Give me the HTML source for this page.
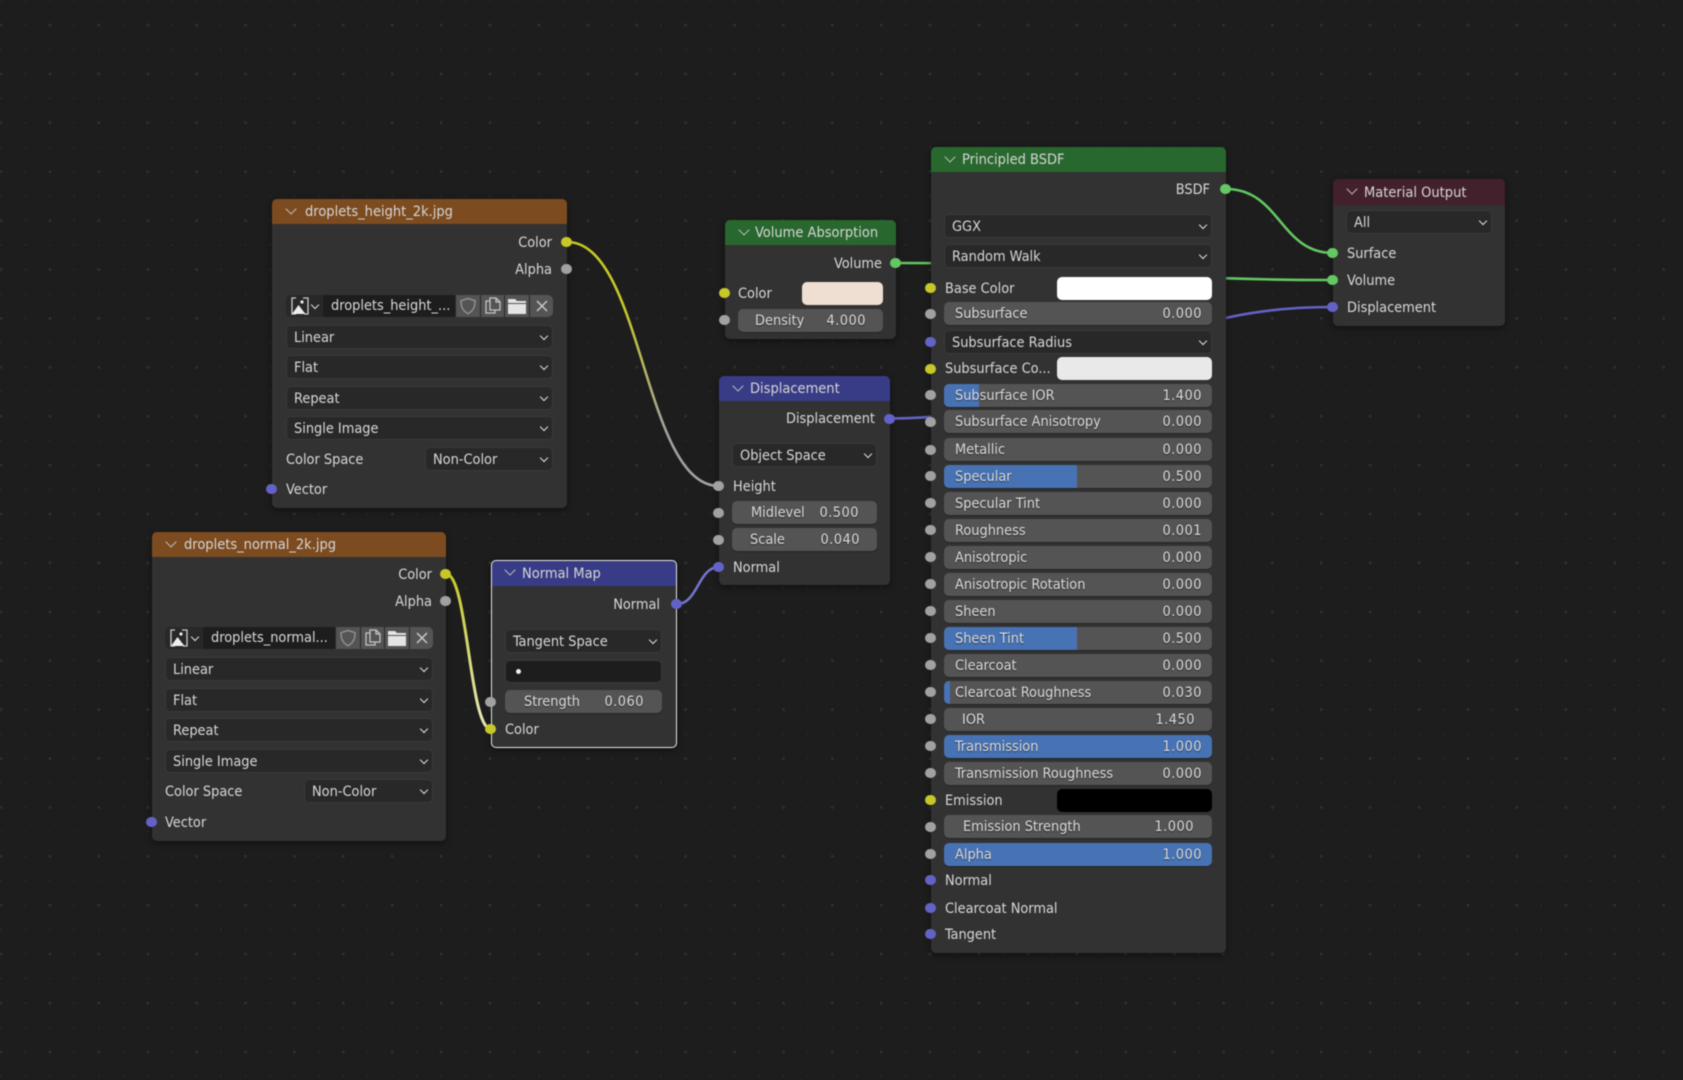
<!DOCTYPE html>
<html><head><meta charset="utf-8"><title>Shader nodes</title>
<style>
html,body{margin:0;padding:0;width:1683px;height:1080px;overflow:hidden;background:#1d1d1d}
#w{position:absolute;left:0;top:0;width:1683px;height:1080px;filter:blur(.55px);font:14.4px "DejaVu Sans Condensed","DejaVu Sans","Liberation Sans",sans-serif;font-stretch:condensed;color:#dcdcdc}
#w>*{position:absolute}
svg{display:block}
.n{background:#323232;border-radius:5px;box-shadow:0 2px 7px rgba(0,0,0,.45)}
.sel{outline:1.5px solid #e8e8e8;outline-offset:-1px}
.h{height:25px;line-height:26px;font-size:14.5px;border-radius:5px 5px 0 0;color:#d6d6d6;white-space:nowrap;box-sizing:border-box}
.h:before{content:"";position:absolute;left:15px;top:6px;width:7px;height:7px;border-right:1.6px solid #bdbdbd;border-bottom:1.6px solid #bdbdbd;transform:rotate(45deg)}
.o{background:#7c4b1f}.g{background:#28672e}.b{background:#383b85}.m{background:#43212c}
.t{height:20px;line-height:22px;white-space:nowrap;color:#d8d8d8}
.d{box-sizing:border-box;height:24px;line-height:24px;background:#282828;border:1px solid #393939;border-radius:5px;padding-left:7px;color:#d8d8d8;white-space:nowrap}
.d:after{content:"";position:absolute;right:5px;top:7px;width:5px;height:5px;border-right:1.6px solid #ddd;border-bottom:1.6px solid #ddd;transform:rotate(45deg)}
.f{box-sizing:border-box;height:23px;line-height:25px;background:#545454;border-radius:5px;overflow:hidden;white-space:nowrap;box-shadow:0 1px 1px rgba(0,0,0,.25)}
.f i{position:absolute;left:0;top:0;bottom:0;background:#4772b3}
.f b,.f u{position:absolute;top:0;font-weight:normal;text-decoration:none;color:#dcdcdc;text-shadow:0 1px 1px rgba(0,0,0,.55)}
.f u{letter-spacing:.5px}
.c{border-radius:5px;box-sizing:border-box;height:23px}
.s{box-sizing:border-box;width:10.500px;height:10.500px;margin:-.5px 0 0 -.8px;border-radius:50%}
.y{background:#c7c729}.a{background:#a1a1a1}.p{background:#6363c7}.e{background:#63c763}
.k{box-sizing:border-box;height:22px;background:#545454}
</style></head><body><div id="w">

<svg style="left:0;top:0" width="1683" height="1080">
<defs>
<pattern id="gd" patternUnits="userSpaceOnUse" x="-11" y="-11.45" width="48.9" height="48.9">
<circle cx="12" cy="12" r="1.2" fill="#272727"/><circle cx="36.45" cy="12" r="1.2" fill="#272727"/>
<circle cx="12" cy="36.45" r="1.5" fill="#303030"/><circle cx="36.45" cy="36.45" r="1.2" fill="#272727"/>
</pattern>
<linearGradient id="yg" gradientUnits="userSpaceOnUse" x1="567" y1="242" x2="719" y2="486"><stop offset=".3" stop-color="#c7c729"/><stop offset=".75" stop-color="#a1a1a1"/></linearGradient>
<linearGradient id="yw" gradientUnits="userSpaceOnUse" x1="446" y1="574" x2="491" y2="729"><stop offset="0" stop-color="#c7c729"/><stop offset="1" stop-color="#e8e8c0"/></linearGradient>
</defs>
<rect width="1683" height="1080" fill="url(#gd)"/>
<g fill="none" stroke-width="2.6" stroke-linecap="round">
<path d="M567 242C643 242 643 486 719 486" stroke="url(#yg)"/>
<path d="M446 574C468 574 469 729 491 729" stroke="url(#yw)" stroke-width="3"/>
<path d="M677 604C698 604 698 567 719 567" stroke="#7474d0"/>
<path d="M896 263C1114 263 1114 280 1333 280" stroke="#63c763"/>
<path d="M890 418.500C1111 418 1111 307 1333 307" stroke="#6363c7"/>
<path d="M1226 189C1280 189 1280 253 1333 253" stroke="#63c763"/>
</g>
</svg>

<!-- droplets_height -->
<div class="n" style="left:272px;top:199px;width:295px;height:309px"></div>
<div class="h o" style="left:272px;top:199px;width:295px;padding-left:33px">droplets_height_2k.jpg</div>
<div class="t" style="right:1131px;top:232px">Color</div>
<div class="t" style="right:1131px;top:259px">Alpha</div>
<div class="c" style="left:286px;top:295px;width:267px;height:22px;background:#282828"></div>
<svg style="left:290px;top:296px" width="20" height="20" viewBox="0 0 20 20" fill="none"><path d="M6 2H2v16h4M13 2h5v16h-4" stroke="#ccc" stroke-width="1.3"/><path d="M2 18l6.500-9 7 9z" fill="#eee"/><circle cx="12" cy="6" r="1.600" fill="#eee"/></svg>
<div style="left:312px;top:302px;width:5px;height:5px;border-right:1.4px solid #ddd;border-bottom:1.4px solid #ddd;transform:rotate(45deg)"></div>
<div class="t" style="left:323px;top:295px;width:132px;height:22px;line-height:23px;background:#1d1d1d;padding-left:8px;box-sizing:border-box;overflow:hidden">droplets_height_...</div>
<div class="k" style="left:456px;top:295px;width:24px;border-radius:0"></div>
<svg style="left:458px;top:296px" width="20" height="20" viewBox="0 0 20 20" fill="none"><path d="M10 2.500l7 2.200c0 6-1.500 10-7 13-5.500-3-7-7-7-13z" stroke="#8f8f8f" stroke-width="1.500"/></svg>
<div class="k" style="left:481px;top:295px;width:23px"></div>
<svg style="left:483px;top:296px" width="20" height="20" viewBox="0 0 20 20" fill="none"><path d="M7 5H3v12h9v-3M7 2h6l4 4v8H7zM13 2v4h4" stroke="#c4c4c4" stroke-width="1.300"/></svg>
<div class="k" style="left:505px;top:295px;width:24px"></div>
<svg style="left:507px;top:296px" width="20" height="20" viewBox="0 0 20 20"><path d="M1 3h7l2 2h9v2H1z M1 8h18v10H1z" fill="#e4e4e4"/></svg>
<div class="k" style="left:530px;top:295px;width:23px;border-radius:0 5px 5px 0"></div>
<svg style="left:533px;top:297px" width="18" height="18" viewBox="0 0 18 18" fill="none"><path d="M4 4l10 10M14 4L4 14" stroke="#c8c8c8" stroke-width="1.500"/></svg>
<div class="d" style="left:286px;top:325px;width:267px">Linear</div>
<div class="d" style="left:286px;top:355px;width:267px">Flat</div>
<div class="d" style="left:286px;top:386px;width:267px">Repeat</div>
<div class="d" style="left:286px;top:416px;width:267px">Single Image</div>
<div class="t" style="left:286px;top:449px">Color Space</div>
<div class="d" style="left:425px;top:447px;width:128px">Non-Color</div>
<div class="t" style="left:286px;top:479px">Vector</div>

<!-- droplets_normal -->
<div class="n" style="left:152px;top:532px;width:294px;height:309px"></div>
<div class="h o" style="left:152px;top:532px;width:294px;padding-left:32px">droplets_normal_2k.jpg</div>
<div class="t" style="right:1251px;top:564px">Color</div>
<div class="t" style="right:1251px;top:591px">Alpha</div>
<div class="c" style="left:165px;top:627px;width:268px;height:22px;background:#282828"></div>
<svg style="left:169px;top:628px" width="20" height="20" viewBox="0 0 20 20" fill="none"><path d="M6 2H2v16h4M13 2h5v16h-4" stroke="#ccc" stroke-width="1.3"/><path d="M2 18l6.500-9 7 9z" fill="#eee"/><circle cx="12" cy="6" r="1.600" fill="#eee"/></svg>
<div style="left:192px;top:634px;width:5px;height:5px;border-right:1.4px solid #ddd;border-bottom:1.4px solid #ddd;transform:rotate(45deg)"></div>
<div class="t" style="left:203px;top:627px;width:132px;height:22px;line-height:23px;background:#1d1d1d;padding-left:8px;box-sizing:border-box;overflow:hidden">droplets_normal...</div>
<div class="k" style="left:336px;top:627px;width:24px"></div>
<svg style="left:338px;top:628px" width="20" height="20" viewBox="0 0 20 20" fill="none"><path d="M10 2.500l7 2.200c0 6-1.500 10-7 13-5.500-3-7-7-7-13z" stroke="#8f8f8f" stroke-width="1.500"/></svg>
<div class="k" style="left:361px;top:627px;width:23px"></div>
<svg style="left:363px;top:628px" width="20" height="20" viewBox="0 0 20 20" fill="none"><path d="M7 5H3v12h9v-3M7 2h6l4 4v8H7zM13 2v4h4" stroke="#c4c4c4" stroke-width="1.300"/></svg>
<div class="k" style="left:385px;top:627px;width:24px"></div>
<svg style="left:387px;top:628px" width="20" height="20" viewBox="0 0 20 20"><path d="M1 3h7l2 2h9v2H1z M1 8h18v10H1z" fill="#e4e4e4"/></svg>
<div class="k" style="left:410px;top:627px;width:23px;border-radius:0 5px 5px 0"></div>
<svg style="left:413px;top:629px" width="18" height="18" viewBox="0 0 18 18" fill="none"><path d="M4 4l10 10M14 4L4 14" stroke="#c8c8c8" stroke-width="1.500"/></svg>
<div class="d" style="left:165px;top:657px;width:268px">Linear</div>
<div class="d" style="left:165px;top:688px;width:268px">Flat</div>
<div class="d" style="left:165px;top:718px;width:268px">Repeat</div>
<div class="d" style="left:165px;top:749px;width:268px">Single Image</div>
<div class="t" style="left:165px;top:781px">Color Space</div>
<div class="d" style="left:304px;top:779px;width:129px">Non-Color</div>
<div class="t" style="left:165px;top:812px">Vector</div>

<!-- Normal Map -->
<div class="n" style="left:491px;top:560px;width:186px;height:188px"></div>
<div class="h b" style="left:491px;top:560px;width:186px;height:26px;line-height:28px;padding-left:31px">Normal Map</div>
<div class="sel" style="left:491px;top:560px;width:186px;height:188px;border-radius:5px"></div>
<div class="t" style="right:1023px;top:594px">Normal</div>
<div class="d" style="left:505px;top:629px;width:157px">Tangent Space</div>
<div class="c" style="left:505px;top:660px;width:157px;background:#1d1d1d;border:1px solid #393939"></div>
<div style="left:516px;top:669px;width:5px;height:5px;border-radius:50%;background:#eee"></div>
<div class="f" style="left:505px;top:690px;width:157px"><b style="left:19px">Strength</b><u style="right:18px">0.060</u></div>
<div class="t" style="left:505px;top:719px">Color</div>

<!-- Displacement -->
<div class="n" style="left:719px;top:376px;width:171px;height:209px"></div>
<div class="h b" style="left:719px;top:376px;width:171px;padding-left:31px">Displacement</div>
<div class="t" style="right:808px;top:408px">Displacement</div>
<div class="d" style="left:732px;top:443px;width:145px">Object Space</div>
<div class="t" style="left:733px;top:476px">Height</div>
<div class="f" style="left:732px;top:501px;width:145px"><b style="left:19px">Midlevel</b><u style="right:18px">0.500</u></div>
<div class="f" style="left:732px;top:528px;width:145px"><b style="left:18px">Scale</b><u style="right:17px">0.040</u></div>
<div class="t" style="left:733px;top:557px">Normal</div>

<!-- Volume Absorption -->
<div class="n" style="left:725px;top:220px;width:171px;height:119px"></div>
<div class="h g" style="left:725px;top:220px;width:171px;padding-left:30px">Volume Absorption</div>
<div class="t" style="right:801px;top:253px">Volume</div>
<div class="t" style="left:738px;top:283px">Color</div>
<div class="c" style="left:802px;top:282px;width:81px;background:#efdfd2"></div>
<div class="f" style="left:738px;top:309px;width:145px"><b style="left:17px">Density</b><u style="right:17px">4.000</u></div>

<!-- Principled -->
<div class="n" style="left:931px;top:147px;width:295px;height:806px"></div>
<div class="h g" style="left:931px;top:147px;width:295px;padding-left:31px">Principled BSDF</div>
<div class="t" style="right:473px;top:179px">BSDF</div>
<div class="d" style="left:944px;top:214px;width:268px">GGX</div>
<div class="d" style="left:944px;top:244px;width:268px">Random Walk</div>
<div class="t" style="left:945px;top:278px">Base Color</div>
<div class="c" style="left:1057px;top:277px;width:155px;background:#fff"></div>
<div class="f" style="left:944px;top:302px;width:268px"><b style="left:11px">Subsurface</b><u style="right:10px">0.000</u></div>
<div class="d" style="left:944px;top:330px;width:268px">Subsurface Radius</div>
<div class="t" style="left:945px;top:358px">Subsurface Co...</div>
<div class="c" style="left:1057px;top:357px;width:155px;background:#e9e9e9"></div>
<div class="f" style="left:944px;top:384px;width:268px"><i style="width:35px"></i><b style="left:11px">Subsurface IOR</b><u style="right:10px">1.400</u></div>
<div class="f" style="left:944px;top:410px;width:268px"><b style="left:11px">Subsurface Anisotropy</b><u style="right:10px">0.000</u></div>
<div class="f" style="left:944px;top:438px;width:268px"><b style="left:11px">Metallic</b><u style="right:10px">0.000</u></div>
<div class="f" style="left:944px;top:465px;width:268px"><i style="width:133px"></i><b style="left:11px">Specular</b><u style="right:10px">0.500</u></div>
<div class="f" style="left:944px;top:492px;width:268px"><b style="left:11px">Specular Tint</b><u style="right:10px">0.000</u></div>
<div class="f" style="left:944px;top:519px;width:268px"><b style="left:11px">Roughness</b><u style="right:10px">0.001</u></div>
<div class="f" style="left:944px;top:546px;width:268px"><b style="left:11px">Anisotropic</b><u style="right:10px">0.000</u></div>
<div class="f" style="left:944px;top:573px;width:268px"><b style="left:11px">Anisotropic Rotation</b><u style="right:10px">0.000</u></div>
<div class="f" style="left:944px;top:600px;width:268px"><b style="left:11px">Sheen</b><u style="right:10px">0.000</u></div>
<div class="f" style="left:944px;top:627px;width:268px"><i style="width:133px"></i><b style="left:11px">Sheen Tint</b><u style="right:10px">0.500</u></div>
<div class="f" style="left:944px;top:654px;width:268px"><b style="left:11px">Clearcoat</b><u style="right:10px">0.000</u></div>
<div class="f" style="left:944px;top:681px;width:268px"><i style="width:6px"></i><b style="left:11px">Clearcoat Roughness</b><u style="right:10px">0.030</u></div>
<div class="f" style="left:944px;top:708px;width:268px"><b style="left:18px">IOR</b><u style="right:17px">1.450</u></div>
<div class="f" style="left:944px;top:735px;width:268px;background:#4772b3"><b style="left:11px">Transmission</b><u style="right:10px">1.000</u></div>
<div class="f" style="left:944px;top:762px;width:268px"><b style="left:11px">Transmission Roughness</b><u style="right:10px">0.000</u></div>
<div class="t" style="left:945px;top:790px">Emission</div>
<div class="c" style="left:1057px;top:789px;width:155px;background:#000"></div>
<div class="f" style="left:944px;top:815px;width:268px"><b style="left:19px">Emission Strength</b><u style="right:18px">1.000</u></div>
<div class="f" style="left:944px;top:843px;width:268px;background:#4772b3"><b style="left:11px">Alpha</b><u style="right:10px">1.000</u></div>
<div class="t" style="left:945px;top:870px">Normal</div>
<div class="t" style="left:945px;top:898px">Clearcoat Normal</div>
<div class="t" style="left:945px;top:924px">Tangent</div>

<!-- Material Output -->
<div class="n" style="left:1333px;top:179px;width:172px;height:147px"></div>
<div class="h m" style="left:1333px;top:179px;width:172px;height:26px;line-height:28px;padding-left:31px">Material Output</div>
<div class="d" style="left:1346px;top:210px;width:146px">All</div>
<div class="t" style="left:1347px;top:243px">Surface</div>
<div class="t" style="left:1347px;top:270px">Volume</div>
<div class="t" style="left:1347px;top:297px">Displacement</div>

<!-- sockets -->
<div class="s y" style="left:562px;top:237px"></div>
<div class="s a" style="left:562px;top:264px"></div>
<div class="s p" style="left:267px;top:484px"></div>
<div class="s y" style="left:441px;top:569px"></div>
<div class="s a" style="left:441px;top:596px"></div>
<div class="s p" style="left:147px;top:817px"></div>
<div class="s p" style="left:672px;top:599px"></div>
<div class="s a" style="left:486px;top:697px"></div>
<div class="s y" style="left:486px;top:724px"></div>
<div class="s p" style="left:885px;top:414px"></div>
<div class="s a" style="left:714px;top:481px"></div>
<div class="s a" style="left:714px;top:508px"></div>
<div class="s a" style="left:714px;top:535px"></div>
<div class="s p" style="left:714px;top:562px"></div>
<div class="s e" style="left:891px;top:258px"></div>
<div class="s y" style="left:720px;top:288px"></div>
<div class="s a" style="left:720px;top:315px"></div>
<div class="s e" style="left:1221px;top:184px"></div>
<div class="s y" style="left:926px;top:283px"></div>
<div class="s a" style="left:926px;top:309px"></div>
<div class="s p" style="left:926px;top:337px"></div>
<div class="s y" style="left:926px;top:364px"></div>
<div class="s a" style="left:926px;top:390px"></div>
<div class="s a" style="left:926px;top:417px"></div>
<div class="s a" style="left:926px;top:445px"></div>
<div class="s a" style="left:926px;top:471px"></div>
<div class="s a" style="left:926px;top:498px"></div>
<div class="s a" style="left:926px;top:525px"></div>
<div class="s a" style="left:926px;top:552px"></div>
<div class="s a" style="left:926px;top:579px"></div>
<div class="s a" style="left:926px;top:606px"></div>
<div class="s a" style="left:926px;top:633px"></div>
<div class="s a" style="left:926px;top:660px"></div>
<div class="s a" style="left:926px;top:687px"></div>
<div class="s a" style="left:926px;top:714px"></div>
<div class="s a" style="left:926px;top:741px"></div>
<div class="s a" style="left:926px;top:768px"></div>
<div class="s y" style="left:926px;top:795px"></div>
<div class="s a" style="left:926px;top:822px"></div>
<div class="s a" style="left:926px;top:849px"></div>
<div class="s p" style="left:926px;top:875px"></div>
<div class="s p" style="left:926px;top:903px"></div>
<div class="s p" style="left:926px;top:929px"></div>
<div class="s e" style="left:1328px;top:248px"></div>
<div class="s e" style="left:1328px;top:275px"></div>
<div class="s p" style="left:1328px;top:302px"></div>
</div></body></html>
